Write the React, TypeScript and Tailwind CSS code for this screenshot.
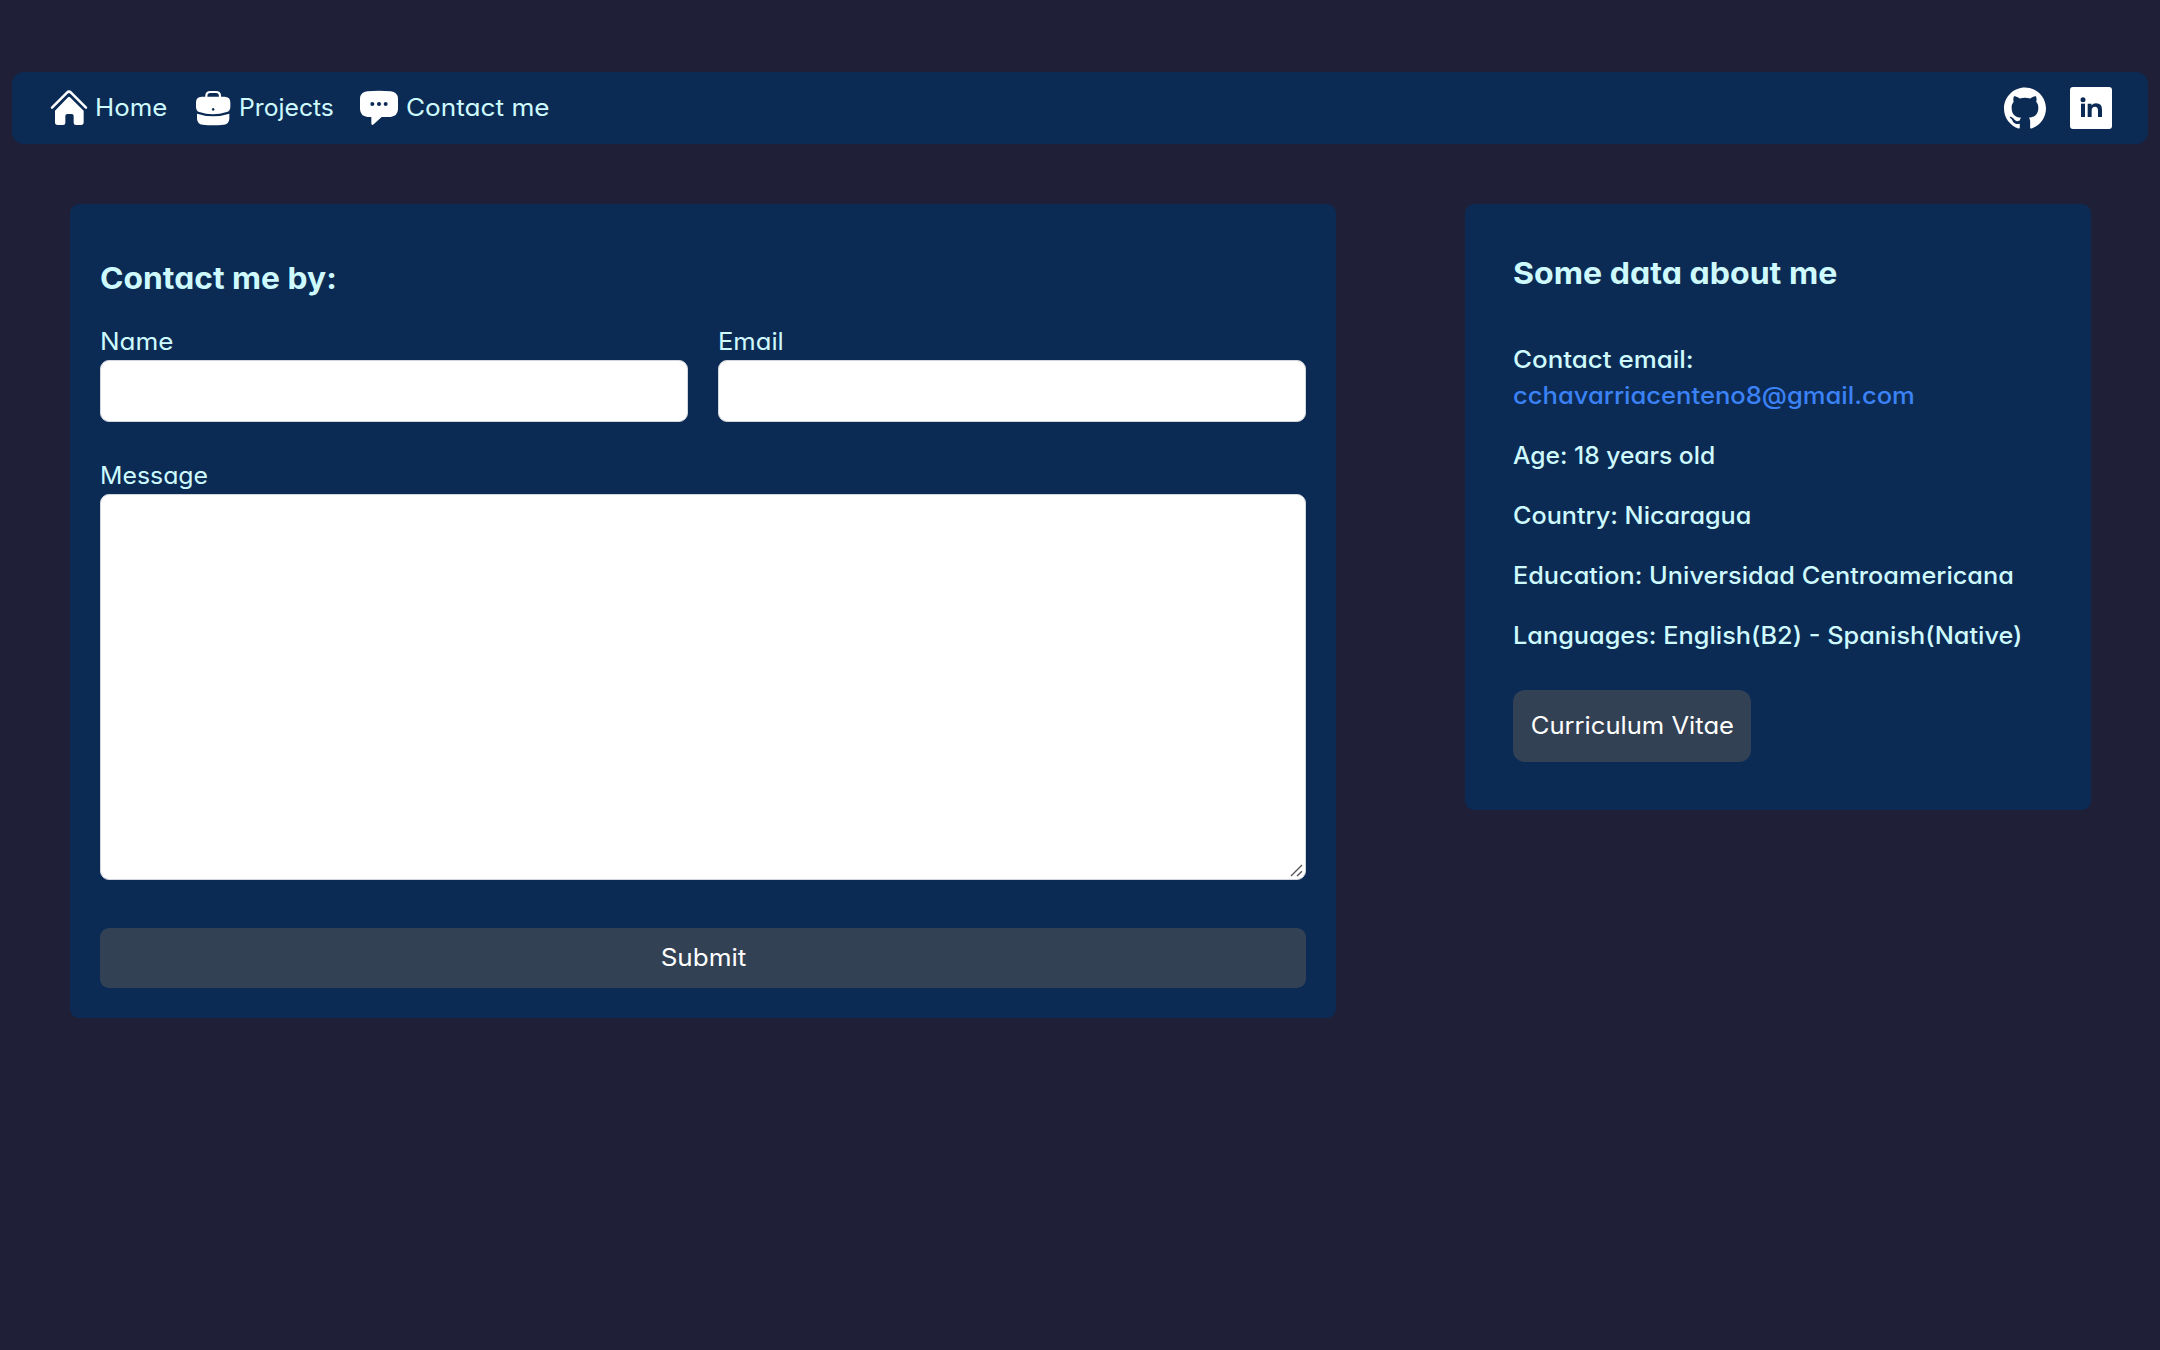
import type { ReactNode } from "react";
import { SiGithub } from "react-icons/si";

function HomeIcon() {
  return (
    <svg viewBox="9 12 108 108" className="size-9 shrink-0 overflow-visible" fill="white">
      <path d="M12 65 L57 20 Q63 14 69 20 L114 65" fill="none" stroke="white" strokeWidth="7.5" strokeLinecap="round" />
      <path d="M60 34 Q63 31 66 34 L107 74 V109 Q107 117 99 117 H84 Q77 117 77 110 V90 Q77 84 71 84 H58 Q52 84 52 90 V110 Q52 117 45 117 H29 Q21 117 21 109 V74 Z" />
    </svg>
  );
}

function BriefcaseIcon() {
  return (
    <svg viewBox="15 12 108 108" className="size-9 shrink-0 overflow-visible" fill="white">
      <path d="M49 36 V30 Q49 18 61 18 H78 Q90 18 90 30 V36" fill="none" stroke="white" strokeWidth="6.5" />
      <path
        fillRule="evenodd"
        d="M35 32 H104 Q121 33 121 49 V62 Q121 75 110 78 Q69 92 28 78 Q18 75 18 62 V49 Q18 33 35 32 Z M69.500 66 a4 4 0 1 0 0.010 0 Z"
      />
      <path d="M21 83 Q69 99 118 83 V98 Q117 114 101 116 Q69 119 38 116 Q22 114 21 98 Z" />
    </svg>
  );
}

function ChatIcon() {
  return (
    <svg viewBox="15 12 108 108" className="size-9 shrink-0 overflow-visible" fill="white">
      <path d="M34 16 Q69 13 104 16 Q125 18 126 38 V70 Q125 90 104 93 H77 L53 115 Q46 120 46 112 V93 H34 Q13 90 12 70 V38 Q13 18 34 16 Z" />
      <g fill="#0b2b54">
        <circle cx="49" cy="54" r="6" />
        <circle cx="69" cy="54" r="6" />
        <circle cx="89" cy="54" r="6" />
      </g>
    </svg>
  );
}

function LinkedInIcon() {
  return (
    <svg viewBox="0 0 126 126" className="size-[42px]">
      <rect width="126" height="126" rx="9" fill="white" />
      <g fill="#0b2b54">
        <circle cx="39" cy="38" r="7.500" />
        <rect x="33" y="50" width="12" height="40" />
        <path d="M53 50 H64.500 V55.500 Q69 49 78 49 Q96 49 96 68 V90 H84 V71 Q84 59.500 75 59.500 Q65 59.500 65 71 V90 H53 Z" />
      </g>
    </svg>
  );
}

function ResizeGrip() {
  return (
    <svg viewBox="0 0 15 14" className="pointer-events-none absolute bottom-0.5 right-0.5 h-[14px] w-[15px]" stroke="#555" strokeWidth="1.400">
      <path d="M2 12 L13 1 M8 12 L13 7.200" />
    </svg>
  );
}

function NavLink({ icon, label, className, textClass }: { icon: ReactNode; label: string; className: string; textClass: string }) {
  return (
    <a href="#" className={`flex items-center gap-2 whitespace-nowrap ${className}`}>
      {icon}
      <span className={`origin-left ${textClass}`}>{label}</span>
    </a>
  );
}

const fieldBox = "block w-full rounded-[9px] border border-gray-300 bg-white";

export default function App() {
  return (
    <div className="min-h-screen bg-[#201f38] px-3 pt-[72px] font-['Inter',sans-serif] text-[24px] leading-9 text-cyan-100 [font-feature-settings:'cv11']">
      <nav className="flex h-[72px] items-center justify-between rounded-xl bg-[#0b2b54] pl-[39px] pr-9">
        <div className="flex">
          <NavLink icon={<HomeIcon />} label="Home" className="w-36" textClass="scale-x-[1.075]" />
          <NavLink icon={<BriefcaseIcon />} label="Projects" className="w-[166px]" textClass="scale-x-[1.03]" />
          <NavLink icon={<ChatIcon />} label="Contact me" className="" textClass="ml-px scale-x-[1.09]" />
        </div>
        <div className="flex gap-6">
          <SiGithub size={42} color="white" />
          <LinkedInIcon />
        </div>
      </nav>

      <main className="mt-[60px] flex items-start justify-between pl-[58px] pr-[57px]">
        <form className="flex w-[1266px] flex-col rounded-[9px] bg-[#0b2b54] px-[30px] pb-[30px] pt-[53px]">
          <h2 className="w-fit origin-left scale-x-[1.06] text-[30px] font-bold leading-[42px]">Contact me by:</h2>
          <div className="mt-[25px] grid grid-cols-2 gap-[30px]">
            <label>
              <span className="block w-fit origin-left scale-x-[1.085]">Name</span>
              <input className={`${fieldBox} h-[62px]`} />
            </label>
            <label>
              <span className="block w-fit origin-left scale-x-[1.065]">Email</span>
              <input className={`${fieldBox} h-[62px]`} />
            </label>
          </div>
          <label className="mt-9">
            <span className="block w-fit origin-left scale-x-[1.035]">Message</span>
            <div className="relative">
              <textarea className={`${fieldBox} h-[386px] resize-none`} />
              <ResizeGrip />
            </div>
          </label>
          <button type="button" className="mt-12 h-[60px] rounded-[9px] bg-[#334154] text-white">
            <span className="inline-block scale-x-[1.085]">Submit</span>
          </button>
        </form>

        <aside className="flex w-[626px] flex-col items-start rounded-[9px] bg-[#0b2b54] p-12 font-medium">
          <h2 className="origin-left scale-x-[1.07] text-[30px] font-bold leading-[42px]">Some data about me</h2>
          <div className="mt-12 flex flex-col items-start gap-6 whitespace-nowrap">
            <div>
              <p className="origin-left scale-x-[1.08]">Contact email:</p>
              <a href="#" className="block origin-left scale-x-[1.065] text-[#3b82f6]">cchavarriacenteno8@gmail.com</a>
            </div>
            <p className="origin-left scale-x-[1.025]">Age: 18 years old</p>
            <p className="origin-left scale-x-[1.05]">Country: Nicaragua</p>
            <p className="origin-left scale-x-[1.053]">Education: Universidad Centroamericana</p>
            <p className="origin-left scale-x-[1.054]">Languages: English(B2) - Spanish(Native)</p>
          </div>
          <button type="button" className="mt-9 h-[72px] w-[238px] rounded-xl bg-[#334154] font-normal text-white">
            <span className="inline-block scale-x-[1.066]">Curriculum Vitae</span>
          </button>
        </aside>
      </main>
    </div>
  );
}
